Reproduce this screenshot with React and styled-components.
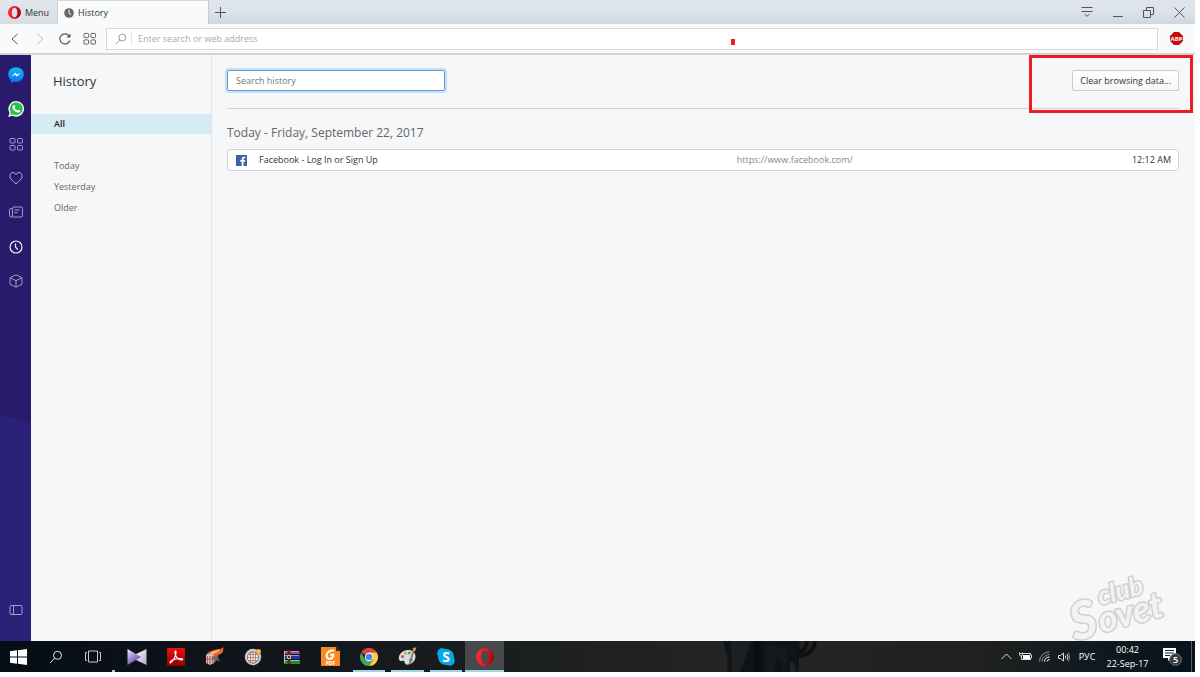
import React from "react";
import styled, { createGlobalStyle, css } from "styled-components";

const COLORS = {
  page: "#f5f7f9",
  line: "#d3d5d8",
  text: "#333",
  muted: "#666",
  sidebar: "#291a6b",
  highlight: "#d6eaf3",
  running: "#a4d3e6",
  red: "#ed1c24",
};

const GlobalStyle = createGlobalStyle`
  * {
    box-sizing: border-box;
  }

  body {
    margin: 0;
    background: #fff;
    color: ${COLORS.text};
    font-family: "Open Sans", "Noto Sans", sans-serif;
    font-size: 9px;
    line-height: 14px;
  }

  button,
  input {
    font: inherit;
    color: inherit;
  }

  a {
    color: inherit;
    text-decoration: none;
  }

  svg {
    display: block;
    flex: none;
  }
`;

const Desktop = styled.div`
  display: flex;
  flex-direction: column;
  min-height: 100vh;
  padding: 0 5px 5px 0;
`;

/* title bar */

const TitleBar = styled.header`
  display: flex;
  height: 24px;
  background: linear-gradient(#dfe5ed, #dce2ea 50%, #d0d6de);
`;

const PlainButton = styled.button`
  display: flex;
  align-items: center;
  justify-content: center;
  border: 0;
  padding: 0;
  background: none;
`;

const MenuButton = styled(PlainButton)`
  width: 58px;
  padding-top: 1px;
  gap: 4px;
  background: linear-gradient(#e2e7ee, #d8dde4);
  border-right: 1px solid #cdd2d9;
`;

const Tab = styled.div`
  display: flex;
  align-items: center;
  gap: 4px;
  width: 151px;
  padding-left: 6px;
  background: #f9fafb;
  border-top: 1px solid #d4d8dd;
  border-right: 1px solid #c6cbd2;
`;

const NewTab = styled(PlainButton)`
  width: 23px;
`;

const WindowButtons = styled.div`
  display: flex;
  margin-left: auto;
`;

const WindowButton = styled(PlainButton)`
  width: 31px;
`;

/* toolbar */

const Toolbar = styled.div`
  display: flex;
  align-items: center;
  height: 31px;
  background: #f9fafb;
  border-bottom: 2px solid #d1d3d4;
`;

const ToolButton = styled(PlainButton)`
  width: 25px;
  height: 22px;
  opacity: ${(props) => (props.disabled ? 0.35 : 1)};
`;

const NavButtons = styled.div`
  display: flex;
  width: 106px;
  padding-left: 2px;
`;

const AddressBar = styled.label`
  display: flex;
  flex: 1;
  align-items: center;
  position: relative;
  height: 22px;
  padding-left: 8px;
  background: #fff;
  border: 1px solid #d5d7da;
`;

const AddressInput = styled.input`
  flex: 1;
  height: 14px;
  margin-left: 4px;
  padding: 0 6px;
  border: 0;
  border-left: 1px solid #e6e6e6;
  background: none;
  outline: none;

  &::placeholder {
    color: #aaa;
    opacity: 1;
  }
`;

const RedMark = styled.span`
  position: absolute;
  top: 10px;
  left: calc(60% - 6px);
  width: 4px;
  height: 6px;
  background: ${COLORS.red};
`;

const Extension = styled(PlainButton)`
  width: 37px;
  height: 22px;
`;

/* browser body */

const Body = styled.div`
  display: flex;
  flex: 1;
  background: ${COLORS.page};
`;

const Sidebar = styled.aside`
  display: flex;
  flex-direction: column;
  justify-content: space-between;
  width: 31px;
  padding: 3px 0 14px;
  background: linear-gradient(196deg, ${COLORS.sidebar} 62%, #2c2178 62%);
`;

const SidebarGroup = styled.div`
  display: grid;
  grid-auto-rows: 1fr;
  height: ${(props) => props.$height};
`;

const Panel = styled.nav`
  width: 181px;
  border-right: 1px solid #e2e4e7;
  padding-top: 16px;
`;

const PanelTitle = styled.h1`
  margin: 0 0 23px;
  padding-left: 22px;
  font-size: 13px;
  font-weight: 400;
  line-height: 20px;
`;

const PanelLink = styled.a`
  display: block;
  padding-left: 23px;
  line-height: 21px;
  color: ${COLORS.muted};

  ${(props) =>
    props.$active &&
    css`
      margin-bottom: 21px;
      background: ${COLORS.highlight};
      color: #222;
      font-weight: 600;
      line-height: 20px;
    `}
`;

const Main = styled.main`
  position: relative;
  flex: 1;
  padding: 15px 16px 0 15px;
`;

const MainHeader = styled.div`
  display: flex;
  justify-content: space-between;
  padding-bottom: 17px;
  border-bottom: 1px solid ${COLORS.line};
`;

const SearchInput = styled.input`
  width: 218px;
  height: 21px;
  padding: 0 8px;
  background: #fff;
  border: 1px solid #5a9bdc;
  border-radius: 2px;
  box-shadow: 0 0 0 2px #c9def3;
  outline: none;

  &::placeholder {
    color: #777;
    opacity: 1;
  }
`;

const ClearButton = styled.button`
  height: 21px;
  padding: 0 7px;
  background: linear-gradient(#fff, #f6f6f6);
  border: 1px solid #cdcdcd;
  border-radius: 2px;
`;

const Callout = styled.div`
  position: absolute;
  top: 0;
  right: 2px;
  width: 164px;
  height: 58px;
  border: 3px solid ${COLORS.red};
  pointer-events: none;
`;

const DayTitle = styled.h2`
  margin: 15px 0 7px;
  color: ${COLORS.muted};
  font-size: 12px;
  font-weight: 400;
  line-height: 18px;
`;

const HistoryList = styled.ul`
  margin: 0;
  padding: 0;
  list-style: none;
  background: #fff;
  border: 1px solid ${COLORS.line};
  border-radius: 3px;
`;

const HistoryItem = styled.li`
  display: grid;
  grid-template-columns: 23px 11fr 9fr 1fr;
  align-items: center;
  height: 20px;
  padding: 0 7px 0 8px;
  white-space: nowrap;
`;

const SiteUrl = styled.span`
  color: #888;
`;

const VisitTime = styled.time`
  justify-self: end;
`;

const Watermark = styled.div`
  position: absolute;
  right: 8px;
  bottom: -22px;
  pointer-events: none;
`;

/* taskbar */

const Taskbar = styled.footer`
  display: flex;
  height: 31px;
  color: #fff;
  background: linear-gradient(
    90deg,
    #050d15,
    #0d1319 16%,
    #1a1d1f 40%,
    #242524 62%,
    #20211f 82%,
    #101a20 91%,
    #07121b
  );
`;

const TaskButton = styled(PlainButton)`
  width: 37px;
`;

const StartEdge = styled.span`
  align-self: flex-end;
  width: 3px;
  height: 2px;
  margin: 0 3px 0 1px;
  background: ${COLORS.running};
`;

const Apps = styled.div`
  display: grid;
  grid-template-columns: repeat(10, 1fr);
  width: 386px;
`;

const AppButton = styled(PlainButton)`
  position: relative;
  background: ${(props) => (props.$active ? "#47494b" : "none")};

  &::after {
    content: "";
    display: ${(props) => (props.$running ? "block" : "none")};
    position: absolute;
    bottom: 0;
    left: ${(props) => (props.$active ? 0 : "3px")};
    right: ${(props) => (props.$active ? 0 : "3px")};
    height: 2px;
    background: ${COLORS.running};
  }
`;

const Wallpaper = styled.div`
  flex: 1;
  padding-left: 219px;
  overflow: hidden;
`;

const TrayButton = styled(PlainButton)`
  width: ${(props) => props.$width || "19px"};
`;

const Clock = styled.time`
  width: 53px;
  padding-top: 2px;
  text-align: center;
`;

const ShowDesktop = styled(PlainButton)`
  width: 4px;
  border-left: 1px solid #56606a;
`;

const Line = ({ w = 14, h = 14, color = "#555", width = 1, box, children }) => (
  <svg
    width={w}
    height={h}
    viewBox={box || `0 0 ${w} ${h}`}
    fill="none"
    stroke={color}
    strokeWidth={width}
    aria-hidden="true"
  >
    {children}
  </svg>
);

const OperaLogo = ({ size, id }) => (
  <svg width={size} height={size} viewBox="0 0 20 20" aria-hidden="true">
    <defs>
      <linearGradient id={id} x1="0" y1="0" x2="1" y2="0.2">
        <stop offset="0" stopColor="#ff2b35" />
        <stop offset="0.55" stopColor="#ee1a27" />
        <stop offset="1" stopColor="#a3060f" />
      </linearGradient>
    </defs>
    <path
      fill={`url(#${id})`}
      fillRule="evenodd"
      d="M10 0a10 10 0 1 0 0 20a10 10 0 1 0 0-20zM10 2.6c2.700 0 4.300 3.300 4.300 7.400s-1.600 7.400-4.300 7.400s-4.300-3.300-4.300-7.400s1.600-7.400 4.300-7.400z"
    />
  </svg>
);

const MessengerIcon = () => (
  <svg width="16" height="16" viewBox="0 0 16 16" aria-hidden="true">
    <defs>
      <linearGradient id="messenger" x1="0" y1="0" x2="0" y2="1">
        <stop offset="0" stopColor="#10b9ff" />
        <stop offset="1" stopColor="#0870f5" />
      </linearGradient>
    </defs>
    <path
      fill="url(#messenger)"
      d="M8 .3C3.600.3.200 3.400.200 7.400c0 2.200 1 4.100 2.700 5.400V16l2.700-1.500c.8.200 1.600.3 2.400.3 4.400 0 7.800-3.200 7.800-7.400S12.400.3 8 .3z"
    />
    <path fill="#fff" d="M3.300 9.800l4-4.200 2 2 3.600-2-3.900 4.200-2.100-2z" />
  </svg>
);

const WhatsAppIcon = () => (
  <svg width="16" height="16" viewBox="0 0 16 16" aria-hidden="true">
    <path fill="#f4fbf5" d="M8.200 0a7.800 7.800 0 1 1-3.600 14.700L.2 16l1.300-4.200A7.800 7.800 0 0 1 8.200 0z" />
    <path fill="#2fc04a" d="M8.200 1.300a6.500 6.500 0 1 1-3.400 12L2 14.200l.9-2.700A6.500 6.500 0 0 1 8.200 1.300z" />
    <path
      fill="#fff"
      d="M5.800 4.200c.5-.2.800-.1 1 .4l.5 1.200c.1.400-.6 1-.6 1.300.6 1.200 1.500 2 2.700 2.500.4 0 .9-1 1.300-.9l1.400.7c.3.200.2.7 0 1.100-.5.9-1.600 1.200-2.600.9-2.400-.7-4.200-2.300-5-4.400-.3-1 .2-2.300 1.300-2.800z"
    />
  </svg>
);

const TilesIcon = ({ color, w = 14 }) => (
  <Line color={color} w={w} h={w} box="0 0 14 14">
    <rect x="1" y="1.500" width="5" height="4.500" rx="1" />
    <rect x="8.500" y="1.500" width="5" height="4.500" rx="1" />
    <rect x="1" y="8.500" width="5" height="4.500" rx="1" />
    <rect x="8.500" y="8.500" width="5" height="4.500" rx="1" />
  </Line>
);

const SearchIcon = ({ color, size }) => (
  <Line w={size} h={size} box="0 0 14 14" color={color}>
    <circle cx="8.500" cy="5.300" r="4" />
    <path d="M5.600 8.200L1.200 12.800" />
  </Line>
);

const SIDE = "#a49bc8";

const sidebarItems = [
  { label: "Messenger", icon: <MessengerIcon /> },
  { label: "WhatsApp", icon: <WhatsAppIcon /> },
  { label: "Speed Dial", icon: <TilesIcon color={SIDE} /> },
  {
    label: "Bookmarks",
    icon: (
      <Line color="#b9b1d8">
        <path d="M7 12.800C3.500 10 .9 7.700.9 4.800c0-1.900 1.300-3.200 3-3.200 1.400 0 2.500.7 3.100 2 .6-1.300 1.700-2 3.100-2 1.700 0 3 1.300 3 3.200 0 2.900-2.600 5.200-6.100 8z" />
      </Line>
    ),
  },
  {
    label: "News",
    icon: (
      <Line color={SIDE}>
        <path d="M3.500 11.500V3.500q0-1.500 1.500-1.500h7q1.500 0 1.500 1.500v7q0 1.500-1.500 1.500h-10q-1.500 0-1.500-1.500v-6q0-1 1.500-1h1M5.500 5h5M5.500 7.500h3" />
      </Line>
    ),
  },
  {
    label: "History",
    icon: (
      <Line color="#f0eef8" width={1.2}>
        <circle cx="7" cy="7" r="6" />
        <path d="M6.500 3.500V7l2.300 2.500" />
      </Line>
    ),
  },
  {
    label: "Extensions",
    icon: (
      <Line color={SIDE}>
        <path d="M7 .8l6 2.900v6.600l-6 2.900-6-2.900V3.700zM1 3.700l6 3 6-3M7 6.700v6.500" />
      </Line>
    ),
  },
];

const apps = [
  {
    label: "Video player",
    icon: (
      <svg width="20" height="18" viewBox="0 0 20 18" aria-hidden="true">
        <defs>
          <linearGradient id="bowA" x1="0" y1="0" x2="0.600" y2="1">
            <stop offset="0" stopColor="#f2eefa" />
            <stop offset="1" stopColor="#5a36a8" />
          </linearGradient>
          <linearGradient id="bowB" x1="0" y1="0" x2="1" y2="1">
            <stop offset="0" stopColor="#fff" />
            <stop offset="1" stopColor="#b7a9c9" />
          </linearGradient>
        </defs>
        <path fill="url(#bowB)" d="M19.500 1v16L7 11V7z" />
        <path fill="url(#bowA)" d="M.5 1v16L14 9z" />
      </svg>
    ),
  },
  {
    label: "Adobe Reader",
    icon: (
      <svg width="18" height="18" viewBox="0 0 18 18" aria-hidden="true">
        <defs>
          <linearGradient id="reader" x1="0" y1="0" x2="0" y2="1">
            <stop offset="0" stopColor="#f20d0d" />
            <stop offset="1" stopColor="#8f0000" />
          </linearGradient>
        </defs>
        <rect width="18" height="18" fill="url(#reader)" />
        <path
          fill="none"
          stroke="#fff"
          strokeWidth="1.100"
          d="M8.500 3c-1 0-.6 2.600.2 4.500C9.500 9.700 12 11.600 14.500 12c1.600.2 1.600-1.200 0-1.400-3-.4-6.800.3-9.500 1.700-2 1-2.400 2.800-1.500 2.700C5.300 14.600 8.300 9 8.900 6c.2-1.600.3-3-.4-3z"
        />
      </svg>
    ),
  },
  {
    label: "Burner",
    icon: (
      <svg width="19" height="19" viewBox="0 0 19 19" aria-hidden="true">
        <path fill="#cfc4c2" d="M1 8l4-2 6 2-2 8-4 2-4-2z" />
        <path stroke="#c4504b" strokeWidth="1" d="M2.500 9v8M5 9v8.500M7.500 9v7M1 12h9" />
        <path fill="#6c6764" d="M8 9l4-2 3 8-3-2-3 3z" />
        <path fill="#e8602c" d="M1 8C3 4 8 3.500 11 2.500s4 .5 8-2.500c-1.500 3 0 4-2 6-2 2-4 1.500-5 3S9.500 10.500 9 8.500 4 6 1 8z" />
        <path fill="#ffbd6a" d="M5 6c3-2.500 7-1.500 10-3.500-1 3-4 3-6 4s-2 .5-4-.5z" />
      </svg>
    ),
  },
  {
    label: "Globe",
    icon: (
      <svg width="18" height="18" viewBox="0 0 18 18" aria-hidden="true">
        <circle cx="9" cy="9" r="8.200" fill="#cfcbc8" />
        <circle cx="9" cy="9.500" r="5.600" fill="#f3efea" stroke="#7d706c" />
        <path fill="none" stroke="#a8706b" strokeWidth=".8" d="M3.400 9.500h11.200M9 4v11M5 6.500h8M5 12.500h8M6.500 4.500v10M11.500 4.500v10" />
        <circle cx="14.500" cy="3.500" r="2.500" fill="#f59a3c" />
        <circle cx="14.500" cy="3.500" r="1" fill="#ffe9a0" />
      </svg>
    ),
  },
  {
    label: "WinRAR",
    icon: (
      <svg width="17" height="14" viewBox="0 0 17 14" aria-hidden="true">
        <path fill="#a5468f" d="M1 1h15l1 3H1z" />
        <path fill="#dd86c9" d="M2 1h14v1H2z" />
        <path fill="#2230b8" d="M1 5h16v4H1z" />
        <path fill="#7f98f0" d="M2 5h14v1H2z" />
        <path fill="#258a30" d="M1 10h16v4H1z" />
        <path fill="#7bd67c" d="M2 10h14v1H2z" />
        <path fill="#4a3424" d="M4.500 0h3v14h-3z" />
        <path fill="none" stroke="#d9c08a" d="M4.500 5.500h3v3h-3zM1.500 1v12" />
      </svg>
    ),
  },
  {
    label: "Foxit PDF",
    icon: (
      <svg width="19" height="19" viewBox="0 0 19 19" aria-hidden="true">
        <path fill="#f78b1f" d="M0 0h15l4 4v15H0z" />
        <path fill="#40220a" d="M15 0l4 4h-4z" />
        <path
          fill="none"
          stroke="#fff"
          strokeWidth="2"
          d="M13.300 3.800C9.500 2.600 6 5 5.600 8c-.3 2.600 1.200 4 3.300 3.800 2-.2 3.300-1.800 3.500-4H9.200"
        />
        <text x="9.500" y="17.500" fill="#fff" fontSize="5" fontWeight="700" textAnchor="middle">
          PDF
        </text>
      </svg>
    ),
  },
  {
    label: "Chrome",
    running: true,
    icon: (
      <svg width="18" height="18" viewBox="0 0 18 18" aria-hidden="true">
        <path fill="#e0453a" d="M9 9L1.200 4.500A9 9 0 0 1 16.800 4.500z" />
        <path fill="#fccd3a" d="M9 9V4.500h7.800A9 9 0 0 1 9 18l3.900-6.800z" />
        <path fill="#3fa757" d="M9 9l3.900 2.300L9 18A9 9 0 0 1 1.200 4.500l3.900 6.800z" />
        <circle cx="9" cy="9" r="4.200" fill="#fff" />
        <circle cx="9" cy="9" r="3.300" fill="#4688f1" />
      </svg>
    ),
  },
  {
    label: "Paint",
    running: true,
    icon: (
      <svg width="19" height="19" viewBox="0 0 19 19" aria-hidden="true">
        <path
          fill="#cfe0ea"
          d="M10 3C5 3 .8 7 .8 11c0 2.500 1.500 3.500 3 3s2.500-.3 2.700 1c.3 1.600 1 3 3.500 2.600 4.500-.6 7.500-4 7.500-8C17.500 5.500 14.500 3 10 3z"
        />
        <circle cx="4.500" cy="9.500" r="1.600" fill="#d84b45" />
        <circle cx="7.500" cy="6.300" r="1.500" fill="#e9a02e" />
        <circle cx="11.300" cy="6" r="1.400" fill="#48a94c" />
        <circle cx="13" cy="13" r="1.700" fill="#3d82ce" />
        <path stroke="#a8672c" strokeWidth="1.600" d="M11.500 17L15.500 4" />
        <path fill="#c99b62" d="M14.500 4L15 1l3.500-.8L17 4.500z" />
      </svg>
    ),
  },
  {
    label: "Skype",
    running: true,
    icon: (
      <svg width="18" height="18" viewBox="0 0 18 18" aria-hidden="true">
        <circle cx="9" cy="9" r="8" fill="#06a9ea" />
        <circle cx="5.200" cy="5.200" r="5" fill="#06a9ea" />
        <circle cx="12.800" cy="12.800" r="5" fill="#06a9ea" />
        <text x="9" y="14" fill="#fff" fontSize="14" fontWeight="700" textAnchor="middle">
          S
        </text>
      </svg>
    ),
  },
  { label: "Opera", running: true, active: true, icon: <OperaLogo size={18} id="operaTask" /> },
];

const history = [
  {
    title: "Facebook - Log In or Sign Up",
    url: "https://www.facebook.com/",
    time: "12:12 AM",
  },
];

const FacebookIcon = () => (
  <svg width="11" height="11" viewBox="0 0 11 11" aria-hidden="true">
    <rect width="11" height="11" fill="#4460a4" />
    <path fill="#fff" d="M5.700 11V6.700H4.300V5.100h1.400V4c0-1.500.9-2.300 2.300-2.300h1.300v1.500h-.9c-.7 0-.9.3-.9.9v1h1.800L9 6.700H7.500V11z" />
  </svg>
);

const SovetLogo = () => (
  <svg
    width="140"
    height="112"
    viewBox="-20 -20 140 112"
    fontFamily="Lato, 'Open Sans', sans-serif"
    fontStyle="italic"
    fontWeight="700"
    fill="#f1f3f4"
    stroke="#cfd0d1"
    strokeWidth="3"
    strokeLinejoin="round"
    paintOrder="stroke"
  >
    <g transform="rotate(-15 50 35)">
      <text x="0" y="58" fontSize="52">
        S
      </text>
      <text x="28" y="57" fontSize="36">
        ovet
      </text>
      <text x="34" y="30" fontSize="26">
        club
      </text>
    </g>
  </svg>
);

const Statue = () => (
  <svg width="96" height="31" viewBox="0 0 96 31" aria-hidden="true">
    <path fill="#101416" d="M0 0h76l2 12-2 4v15h-3l-2-9-4-1v10H4C6 20 3 10 0 0z" />
    <path fill="#1c2022" d="M8 0h20l-6 18-5 13H9z" />
    <path fill="#0b0e10" d="M30 0h8v31h-7z" />
    <path fill="#15191b" d="M42 6c8-2 18-1 22 3v14l-5 8c2-16-10-18-8 0h-9z" />
    <path fill="none" stroke="#0e1113" strokeWidth="4" d="M74 11c6 0 9-3 10-11M74 15c12 0 17-6 18-15" />
  </svg>
);

const App = () => {
  return (
    <Desktop>
      <GlobalStyle />
      <TitleBar>
        <MenuButton>
          <OperaLogo size={13} id="operaMenu" />
          Menu
        </MenuButton>
        <Tab>
          <svg width="10" height="10" viewBox="0 0 10 10" aria-hidden="true">
            <circle cx="5" cy="5" r="4.800" fill="#666" />
            <path fill="none" stroke="#fff" d="M5 1.800V5.200l2.200 1.600" />
          </svg>
          History
        </Tab>
        <NewTab aria-label="New tab">
          <Line w={11} h={11}>
            <path d="M5.500 0v11M0 5.500h11" />
          </Line>
        </NewTab>
        <WindowButtons>
          <WindowButton aria-label="Tab menu">
            <Line w={12} h={12}>
              <path d="M.5 1.500h11M.5 5.500h11M3.500 8l2.500 2.300L8.500 8" />
            </Line>
          </WindowButton>
          <WindowButton aria-label="Minimize">
            <Line w={10} h={11}>
              <path d="M0 9.500h10" />
            </Line>
          </WindowButton>
          <WindowButton aria-label="Restore">
            <Line w={11} h={11}>
              <path d="M.5 3.500h7v7h-7zM3.500 3.500v-3h7v7h-3" />
            </Line>
          </WindowButton>
          <WindowButton aria-label="Close">
            <Line w={11} h={11}>
              <path d="M.5.5l10 10M10.500.5l-10 10" />
            </Line>
          </WindowButton>
        </WindowButtons>
      </TitleBar>

      <Toolbar>
        <NavButtons>
          <ToolButton aria-label="Back">
            <Line w={12} h={12}>
              <path d="M8.500 1L3 6l5.500 5" />
            </Line>
          </ToolButton>
          <ToolButton aria-label="Forward" disabled>
            <Line w={12} h={12}>
              <path d="M3.500 1L9 6l-5.500 5" />
            </Line>
          </ToolButton>
          <ToolButton aria-label="Reload">
            <Line w={12} h={12} width={1.2}>
              <path d="M10.800 7.500A5.100 5.100 0 1 1 10 2.800" />
              <path fill="#555" stroke="none" d="M11.500.5v4h-4z" />
            </Line>
          </ToolButton>
          <ToolButton aria-label="Speed dial">
            <TilesIcon color="#555" w={13} />
          </ToolButton>
        </NavButtons>
        <AddressBar>
          <SearchIcon color="#888" size={12} />
          <AddressInput aria-label="Address" placeholder="Enter search or web address" />
          <RedMark />
        </AddressBar>
        <Extension aria-label="Adblock Plus">
          <svg width="13" height="13" viewBox="0 0 13 13" aria-hidden="true">
            <path fill="#c90a0a" d="M4 0h5l4 4v5l-4 4H4L0 9V4z" />
            <text x="6.500" y="8.500" fill="#fff" fontSize="6" fontWeight="700" textAnchor="middle">
              ABP
            </text>
          </svg>
        </Extension>
      </Toolbar>

      <Body>
        <Sidebar>
          <SidebarGroup $height="240px">
            {sidebarItems.map((item) => (
              <PlainButton key={item.label} aria-label={item.label}>
                {item.icon}
              </PlainButton>
            ))}
          </SidebarGroup>
          <SidebarGroup $height="34px">
            <PlainButton aria-label="Toggle sidebar">
              <Line color={SIDE}>
                <rect x="1" y="2.500" width="12" height="9" rx="1" />
                <path d="M4.500 2.500v9" />
              </Line>
            </PlainButton>
          </SidebarGroup>
        </Sidebar>

        <Panel>
          <PanelTitle>History</PanelTitle>
          <PanelLink href="#all" $active>
            All
          </PanelLink>
          <PanelLink href="#today">Today</PanelLink>
          <PanelLink href="#yesterday">Yesterday</PanelLink>
          <PanelLink href="#older">Older</PanelLink>
        </Panel>

        <Main>
          <MainHeader>
            <SearchInput aria-label="Search history" placeholder="Search history" />
            <ClearButton>Clear browsing data...</ClearButton>
          </MainHeader>
          <Callout />
          <DayTitle>Today - Friday, September 22, 2017</DayTitle>
          <HistoryList>
            {history.map((item) => (
              <HistoryItem key={item.url}>
                <FacebookIcon />
                <a href={item.url}>{item.title}</a>
                <SiteUrl>{item.url}</SiteUrl>
                <VisitTime>{item.time}</VisitTime>
              </HistoryItem>
            ))}
          </HistoryList>
          <Watermark>
            <SovetLogo />
          </Watermark>
        </Main>
      </Body>

      <Taskbar>
        <TaskButton aria-label="Start">
          <svg width="17" height="16" viewBox="0 0 17 16" fill="#fff" aria-hidden="true">
            <path d="M0 2.300l7-1v6.200H0zM8 1.200L17 0v7.500H8zM0 8.500h7v6.200l-7-1zM8 8.500h9V16l-9-1.200z" />
          </svg>
        </TaskButton>
        <TaskButton aria-label="Search">
          <SearchIcon color="#e8e8e8" size={14} />
        </TaskButton>
        <TaskButton aria-label="Task view">
          <Line w={16} h={13} color="#c9cbcc">
            <path d="M3.500 1h9v11h-9zM2 2.500H.5v8H2M14 2.500h1.500v8H14" />
          </Line>
        </TaskButton>
        <StartEdge />
        <Apps>
          {apps.map((app) => (
            <AppButton
              key={app.label}
              aria-label={app.label}
              $running={app.running}
              $active={app.active}
            >
              {app.icon}
            </AppButton>
          ))}
        </Apps>
        <Wallpaper>
          <Statue />
        </Wallpaper>
        <TrayButton aria-label="Show hidden icons">
          <Line w={11} h={7} color="#ddd">
            <path d="M.5 6l5-5 5 5" />
          </Line>
        </TrayButton>
        <TrayButton aria-label="Battery">
          <svg width="13" height="9" viewBox="0 0 13 9" aria-hidden="true">
            <path fill="#fff" d="M4 3h7v4H4z" />
            <path fill="none" stroke="#ddd" d="M4 1.500h7.500v1.500h1v3h-1v1.500H2.500V4M.5.5v2q0 1.500 1.500 1.500t1.500-1.500v-2M.5 1.500h3" />
          </svg>
        </TrayButton>
        <TrayButton aria-label="Network">
          <Line w={11} h={11} color="#999">
            <path d="M.5 10.500A10 10 0 0 1 10.500.8M3 10.500A7.500 7.500 0 0 1 10.500 3.500" />
            <path stroke="#fff" d="M5.500 10.500a5 5 0 0 1 5-4.500M8 10.500a2.500 2.500 0 0 1 2.500-2" />
          </Line>
        </TrayButton>
        <TrayButton aria-label="Volume">
          <Line w={12} h={10} color="#ddd">
            <path d="M.5 3.500h2l3-2.500v8l-3-2.500h-2zM7.300 3.500q1 1.500 0 3M9 2q2 3 0 6" />
            <path stroke="#888" d="M10.500.5q2.500 4.500 0 9" />
          </Line>
        </TrayButton>
        <TrayButton $width="28px">РУС</TrayButton>
        <Clock>
          00:42
          <br />
          22-Sep-17
        </Clock>
        <TrayButton $width="37px" aria-label="5 new notifications">
          <svg width="21" height="19" viewBox="0 0 21 19" aria-hidden="true">
            <path fill="#fff" d="M1 1h13v10H9l-3 3v-3H1z" />
            <path stroke="#222" d="M3 3.500h9M3 6h9M3 8.500h5" />
            <circle cx="13.500" cy="12.500" r="5.800" fill="#35393c" stroke="#777" />
            <text x="13.500" y="15.500" fill="#fff" fontSize="9" fontWeight="600" textAnchor="middle">
              5
            </text>
          </svg>
        </TrayButton>
        <ShowDesktop aria-label="Show desktop" />
      </Taskbar>
    </Desktop>
  );
};

export default App;
